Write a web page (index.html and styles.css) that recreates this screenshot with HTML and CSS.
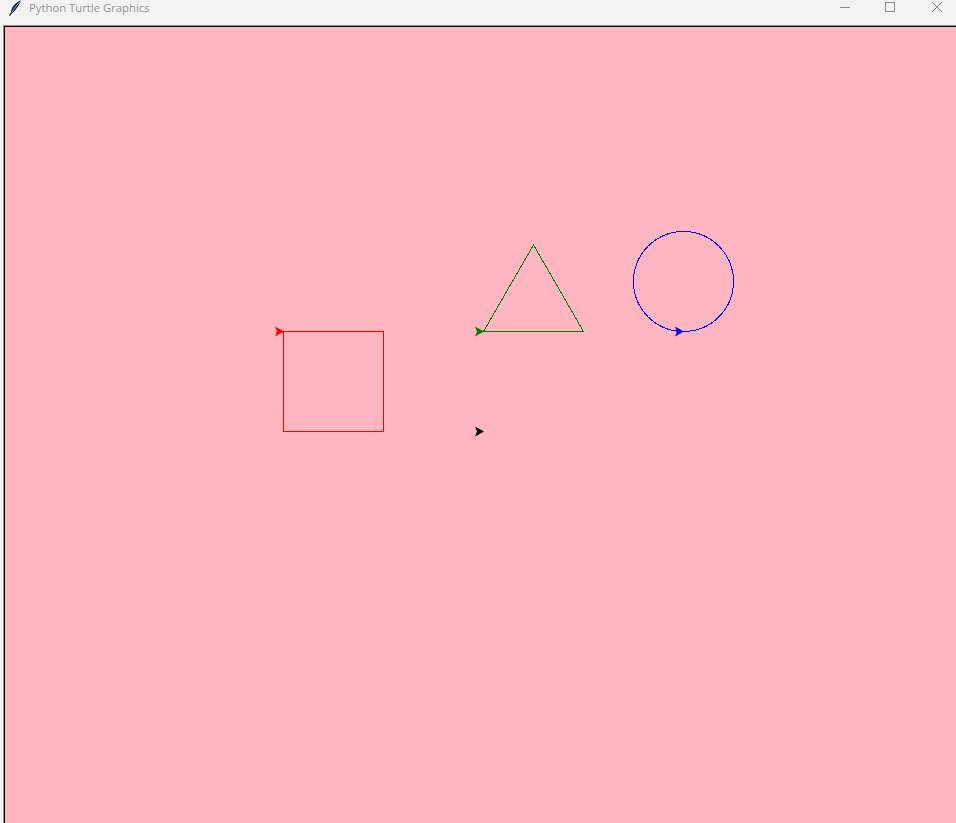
FILE: index.html
```html
<!DOCTYPE html>
<html>
<head>
<meta charset="utf-8">
<title>Python Turtle Graphics</title>
<link rel="stylesheet" href="styles.css">
</head>
<body>
<div class="window">
  <div class="titlebar">
    <div class="title-left">
      <svg class="app-icon" width="14" height="16" viewBox="0 0 14 16">
        <path d="M12.8 0.6 C9 1.8 5.2 5 3.5 9.5 C2.9 11 2.7 12.6 3.1 13.5 C4.6 13 6.2 11.6 7.8 9.5 C10.3 6.2 12.3 3.4 12.8 0.6 Z" fill="#15294a"/>
        <path d="M11.9 1.8 C9 4.5 6.4 8 3.9 12.4" stroke="#aebfd6" stroke-width="0.8" fill="none"/>
        <path d="M3.5 12.8 L1.5 15.6" stroke="#15294a" stroke-width="1.2" fill="none"/>
      </svg>
      <span class="title-text">Python Turtle Graphics</span>
    </div>
    <div class="controls">
      <svg class="ctl" width="46" height="25" viewBox="0 0 46 25"><path d="M18 7.5 H28" stroke="#8e8e8e" stroke-width="1"/></svg>
      <svg class="ctl" width="46" height="25" viewBox="0 0 46 25"><rect x="17.5" y="2.5" width="9" height="9" stroke="#8e8e8e" stroke-width="1" fill="none"/></svg>
      <svg class="ctl" width="46" height="25" viewBox="0 0 46 25"><path d="M18 2 L28 12 M28 2 L18 12" stroke="#8e8e8e" stroke-width="1" fill="none"/></svg>
    </div>
  </div>
  <div class="frame">
    <div class="canvas">
      <svg class="drawing" width="951" height="796" viewBox="0 0 951 796">
        <g transform="translate(-5,-27)" shape-rendering="crispEdges" fill="none" stroke-width="1">
          <rect x="283.5" y="331.5" width="100" height="100" stroke="#ff0000"/>
          <polygon points="483.5,331.5 583.5,331.5 533.5,244.9" stroke="#008000"/>
          <circle cx="683.5" cy="281.5" r="50" stroke="#0000ff"/>
        </g>
        <g transform="translate(-5,-27)" stroke="none">
          <polygon points="284,331.5 275,326.5 277,331.5 275,336.5" fill="#ff0000"/>
          <polygon points="484,331.5 475,326.5 477,331.5 475,336.5" fill="#008000"/>
          <polygon points="684,331.5 675,326.5 677,331.5 675,336.5" fill="#0000ff"/>
          <polygon points="484,431.5 475,426.5 477,431.5 475,436.5" fill="#000000"/>
        </g>
      </svg>
    </div>
  </div>
</div>
</body>
</html>
```
FILE: styles.css
```css
html, body {
  margin: 0;
  padding: 0;
  width: 956px;
  height: 823px;
  overflow: hidden;
  background: #f3f3f3;
}
.window {
  display: flex;
  flex-direction: column;
  width: 956px;
  height: 823px;
}
.titlebar {
  height: 25px;
  flex: 0 0 25px;
  display: flex;
  justify-content: space-between;
  align-items: flex-start;
  background: #f3f3f3;
}
.title-left {
  display: flex;
  align-items: center;
  height: 16px;
  padding-left: 8px;
}
.app-icon {
  display: block;
  margin-right: 7px;
}
.title-text {
  font-family: "Open Sans", "Liberation Sans", sans-serif;
  font-size: 11.3px;
  color: #959595;
  line-height: 16px;
  white-space: nowrap;
}
.controls {
  display: flex;
  margin-right: -4px;
}
.ctl {
  display: block;
}
.frame {
  flex: 1 1 auto;
  margin-left: 3px;
  border-top: 1px solid #9d8c8e;
  border-left: 1px solid #9d8c8e;
  overflow: hidden;
}
.canvas {
  height: 100%;
  border-top: 1px solid #000;
  border-left: 1px solid #000;
  background: #ffb6c1;
  overflow: hidden;
}
.drawing {
  display: block;
}
```
